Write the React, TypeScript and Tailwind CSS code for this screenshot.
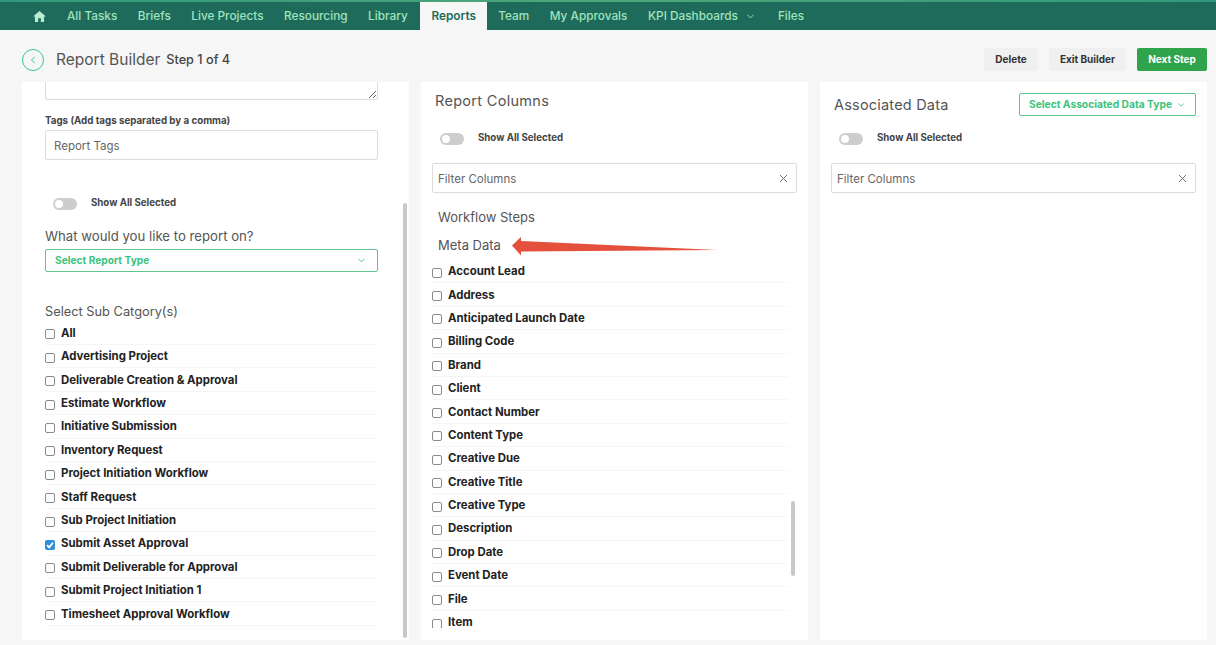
import React from "react";
import { ChevronDown, ChevronLeft, X } from "lucide-react";

const navItems = ["All Tasks", "Briefs", "Live Projects", "Resourcing", "Library"];
const navItemsRight = ["Team", "My Approvals"];

const subCategories = [
  "All",
  "Advertising Project",
  "Deliverable Creation & Approval",
  "Estimate Workflow",
  "Initiative Submission",
  "Inventory Request",
  "Project Initiation Workflow",
  "Staff Request",
  "Sub Project Initiation",
  "Submit Asset Approval",
  "Submit Deliverable for Approval",
  "Submit Project Initiation 1",
  "Timesheet Approval Workflow",
];

const metaColumns = [
  "Account Lead",
  "Address",
  "Anticipated Launch Date",
  "Billing Code",
  "Brand",
  "Client",
  "Contact Number",
  "Content Type",
  "Creative Due",
  "Creative Title",
  "Creative Type",
  "Description",
  "Drop Date",
  "Event Date",
  "File",
  "Item",
];

const Toggle = ({ className }: { className: string }) => (
  <div className={`flex items-center ${className}`}>
    <div className="w-[24px] h-[12px] rounded-full bg-[#cdcdcd] flex items-center pl-[2px]">
      <div className="w-[8px] h-[8px] rounded-full bg-white" />
    </div>
    <span className="ml-[14px] -mt-[3px] text-[9.7px] leading-[12px] font-bold text-[#444]">Show All Selected</span>
  </div>
);

const CheckRow = ({ label, checked }: { label: string; checked?: boolean }) => (
  <div className="h-[23.4px] shrink-0 flex items-center border-b border-[#f6f6f6]">
    {checked ? (
      <div className="w-[10px] h-[10px] mt-[3px] mr-[6px] shrink-0 rounded-[2px] bg-[#2c8ed6] flex items-center justify-center">
        <svg viewBox="0 0 10 10" className="w-[10px] h-[10px]" fill="none" stroke="white" strokeWidth={1.8}>
          <path d="M2 5.2 L4.2 7.4 L8 2.6" />
        </svg>
      </div>
    ) : (
      <div className="w-[10px] h-[10px] mt-[3px] mr-[6px] shrink-0 rounded-[2px] border border-[#8a8a8a] bg-white" />
    )}
    <span className="text-[11.4px] leading-[14px] font-bold text-[#222]">{label}</span>
  </div>
);

const FilterInput = ({ className }: { className: string }) => (
  <div className={`h-[30px] flex items-center justify-between border border-[#dcdcdc] rounded-[2px] bg-white pl-[5px] pr-[6px] ${className}`}>
    <span className="pt-[4px] text-[11.5px] text-[#666]">Filter Columns</span>
    <X className="w-[13px] h-[13px] text-[#555]" strokeWidth={1.5} />
  </div>
);

export default function App() {
  return (
    <div className="h-[645px] w-[1216px] overflow-hidden flex flex-col bg-[#f6f6f6] font-['Inter',sans-serif]">
      {/* top nav */}
      <div className="h-[2px] shrink-0 bg-gradient-to-r from-[#2f9a7c] via-[#4fa57a] to-[#2f9a7c]" />
      <div className="h-[28px] shrink-0 bg-[#1f6b5b] flex items-center pl-[33px] text-[11.8px] font-medium text-[#9fe3bd]">
        <svg viewBox="0 0 14 12" className="w-[13px] h-[11px] mr-[21px] mt-[1px]" fill="#b9ecd0">
          <path d="M7 0 L14 6 L12 6 L12 12 L8.5 12 L8.5 8 L5.5 8 L5.5 12 L2 12 L2 6 L0 6 Z" />
        </svg>
        {navItems.map((item) => (
          <span key={item} className="mr-[20.5px] pt-[1px]">{item}</span>
        ))}
        <span className="h-full w-[67px] -ml-[8px] mr-[11px] pt-[1px] bg-[#f6f6f6] flex items-center justify-center font-semibold text-[#1f6b5b]">
          Reports
        </span>
        {navItemsRight.map((item) => (
          <span key={item} className="mr-[20.5px] pt-[1px]">{item}</span>
        ))}
        <span className="pt-[1px]">KPI Dashboards</span>
        <ChevronDown className="w-[11px] h-[11px] ml-[7px] mr-[22px]" />
        <span className="pt-[1px]">Files</span>
      </div>

      {/* page header */}
      <div className="h-[52px] shrink-0 flex items-center pt-[7px] pl-[22px] pr-[9px]">
        <div className="w-[22px] h-[22px] rounded-full border border-[#3cc58a] flex items-center justify-center mr-[12px]">
          <ChevronLeft className="w-[12px] h-[12px] text-[#3cc58a]" strokeWidth={2} />
        </div>
        <span className="text-[15.5px] text-[#555]">Report Builder</span>
        <span className="ml-[6px] text-[12.7px] font-medium text-[#444]">Step 1 of 4</span>
        <div className="ml-auto flex items-center text-[10px] font-bold">
          <button className="w-[54px] h-[23px] rounded-[2px] bg-[#f0f0f0] text-[#333]">Delete</button>
          <button className="w-[77px] h-[23px] ml-[11px] rounded-[2px] bg-[#f0f0f0] text-[#333]">Exit Builder</button>
          <button className="w-[70px] h-[23px] ml-[11px] rounded-[2px] bg-[#2fa44a] text-white">Next Step</button>
        </div>
      </div>

      {/* panels */}
      <div className="h-[558px] flex gap-[12px] pl-[22px] pr-[9px]">
        {/* left */}
        <div className="relative w-[387px] bg-white overflow-hidden pl-[23px] pr-[31px] flex flex-col">
          <textarea readOnly className="h-[40px] -mt-[22px] shrink-0 border border-[#dcdcdc] rounded-[2px] outline-none" />
          <label className="mt-[15px] text-[9.75px] leading-[12px] font-bold text-[#444]">
            Tags (Add tags separated by a comma)
          </label>
          <div className="mt-[3px] h-[30px] shrink-0 flex items-center border border-[#dcdcdc] rounded-[2px] pl-[8px] pt-[4px] text-[11.5px] text-[#666]">
            Report Tags
          </div>
          <Toggle className="mt-[38px] ml-[8px]" />
          <p className="mt-[18px] text-[13.2px] leading-[16px] text-[#555]">What would you like to report on?</p>
          <div className="mt-[5px] h-[23px] shrink-0 flex items-center justify-between border border-[#5cc48f] rounded-[2px] pl-[9px] pr-[10px]">
            <span className="text-[10.2px] font-bold text-[#3cc47c]">Select Report Type</span>
            <ChevronDown className="w-[11px] h-[11px] text-[#3cc47c]" />
          </div>
          <p className="mt-[32px] mb-[1.7px] text-[12.8px] leading-[16px] text-[#555]">Select Sub Catgory(s)</p>
          {subCategories.map((item) => (
            <CheckRow key={item} label={item} checked={item === "Submit Asset Approval"} />
          ))}
          {/* scrollbar */}
          <div className="absolute left-[381px] top-[121px] w-[4px] h-[435px] rounded-full bg-[#c8c8c8]" />
        </div>

        {/* middle */}
        <div className="relative w-[387px] bg-white overflow-hidden pl-[11px] pr-[20px] pb-[12px] flex flex-col">
          <h2 className="mt-[10px] ml-[3px] text-[14.5px] leading-[18px] tracking-[0.3px] text-[#555]">Report Columns</h2>
          <Toggle className="mt-[23px] ml-[8px]" />
          <FilterInput className="mt-[18px] -mr-[9px] shrink-0" />
          <h3 className="mt-[16px] ml-[6px] text-[13px] leading-[16px] text-[#555]">Workflow Steps</h3>
          <h3 className="mt-[12px] ml-[6px] text-[13px] leading-[16px] text-[#555]">Meta Data</h3>
          <div className="mt-[7px] flex-1 min-h-0 overflow-hidden flex flex-col">
            {metaColumns.map((item) => (
              <CheckRow key={item} label={item} />
            ))}
          </div>
          {/* scrollbar */}
          <div className="absolute left-[370px] top-[419px] w-[4px] h-[75px] rounded-full bg-[#c8c8c8]" />
          {/* red annotation arrow */}
          <svg className="absolute left-[90px] top-[154px] w-[207px] h-[20px]" viewBox="0 0 207 20" fill="#e5503c">
            <path d="M1 9.5 L10 1 L10 5 L206 14 L10 15.5 L10 19.5 Z" />
          </svg>
        </div>

        {/* right */}
        <div className="w-[387px] bg-white pl-[11px] pr-[11px] flex flex-col">
          <div className="mt-[11px] h-[23px] flex items-center justify-between">
            <h2 className="ml-[3px] text-[14.5px] tracking-[0.2px] text-[#555]">Associated Data</h2>
            <div className="w-[177px] h-[23px] flex items-center justify-center border border-[#5cc48f] rounded-[2px]">
              <span className="text-[10.25px] font-bold text-[#3cc47c]">Select Associated Data Type</span>
              <ChevronDown className="w-[10px] h-[10px] ml-[4px] text-[#3cc47c]" />
            </div>
          </div>
          <Toggle className="mt-[17px] ml-[8px]" />
          <FilterInput className="mt-[18px] shrink-0" />
        </div>
      </div>
    </div>
  );
}
